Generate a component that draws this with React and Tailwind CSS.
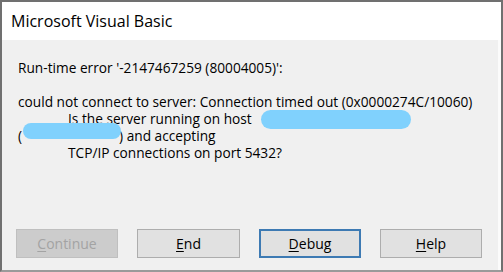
import React from "react";

export default function App() {
  const font = { fontFamily: '"Open Sans", "Noto Sans", sans-serif' };
  return (
    <div className="w-[503px] h-[272px] bg-white">
      <div
        className="w-[503px] h-[272px] flex flex-col border-2 border-[#707070] border-b-[#9a9a9a] overflow-hidden"
        style={font}
      >
        <div className="h-[38px] bg-white flex items-center pl-[9px] text-[16px] text-black">
          Microsoft Visual Basic
        </div>
        <div className="flex-1 bg-[#f0f0f0] flex flex-col border-r-[3px] border-[#fbfbfb]">
          <div className="relative pt-[19px] pl-[16px] text-[13.7px] leading-[17px] text-black whitespace-pre">
            <div>Run-time error '-2147467259 (80004005)':</div>
            <div>&nbsp;</div>
            <div>could not connect to server: Connection timed out (0x0000274C/10060)</div>
            <div className="pl-[50px]">Is the server running on host</div>
            <div>(<span className="inline-block w-[97px]" />) and accepting</div>
            <div className="pl-[50px]">TCP/IP connections on port 5432?</div>
            <div className="absolute left-[259px] top-[70px] w-[150px] h-[19px] rounded-[10px] bg-[#80d1fd]" />
            <div className="absolute left-[21px] top-[83px] w-[98px] h-[16px] rounded-[8px] bg-[#80d1fd]" />
          </div>
          <div className="flex-1" />
          <div className="flex gap-[19px] pl-[14px] pb-[12px] text-[14px]">
            <div className="w-[102px] h-[29px] bg-[#cccccc] border border-[#bfbfbf] text-[#a3a3a3] flex items-center justify-center">
              <span><span className="underline underline-offset-2">C</span>ontinue</span>
            </div>
            <div className="w-[103px] h-[29px] bg-[#e1e1e1] border border-[#adadad] text-black flex items-center justify-center">
              <span><span className="underline underline-offset-2">E</span>nd</span>
            </div>
            <div className="w-[102px] h-[29px] bg-[#e1e1e1] border-2 border-[#3d7ab3] text-black flex items-center justify-center">
              <span><span className="underline underline-offset-2">D</span>ebug</span>
            </div>
            <div className="w-[102px] h-[29px] bg-[#e1e1e1] border border-[#adadad] text-black flex items-center justify-center">
              <span><span className="underline underline-offset-2">H</span>elp</span>
            </div>
          </div>
        </div>
      </div>
    </div>
  );
}
